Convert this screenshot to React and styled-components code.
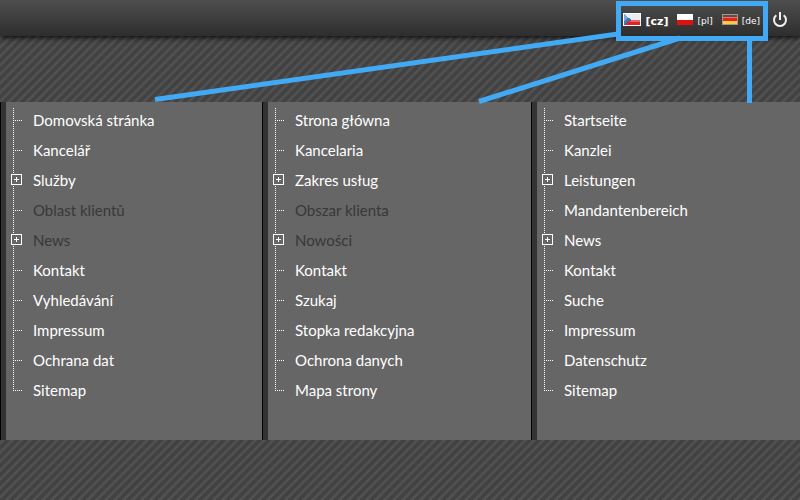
import styled, { createGlobalStyle } from "styled-components";

const theme = {
  blue: "#42aaf5",
  panel: "#666666",
  edge: "#333333",
  white: "#ffffff",
  muted: "#383838",
};

const menus = [
  {
    lang: "cs",
    items: [
      { text: "Domovská stránka" },
      { text: "Kancelář" },
      { text: "Služby", open: true },
      { text: "Oblast klientů", muted: true },
      { text: "News", open: true, muted: true },
      { text: "Kontakt" },
      { text: "Vyhledávání" },
      { text: "Impressum" },
      { text: "Ochrana dat" },
      { text: "Sitemap" },
    ],
  },
  {
    lang: "pl",
    items: [
      { text: "Strona główna" },
      { text: "Kancelaria" },
      { text: "Zakres usług", open: true },
      { text: "Obszar klienta", muted: true },
      { text: "Nowości", open: true, muted: true },
      { text: "Kontakt" },
      { text: "Szukaj" },
      { text: "Stopka redakcyjna" },
      { text: "Ochrona danych" },
      { text: "Mapa strony" },
    ],
  },
  {
    lang: "de",
    items: [
      { text: "Startseite" },
      { text: "Kanzlei" },
      { text: "Leistungen", open: true },
      { text: "Mandantenbereich" },
      { text: "News", open: true },
      { text: "Kontakt" },
      { text: "Suche" },
      { text: "Impressum" },
      { text: "Datenschutz" },
      { text: "Sitemap" },
    ],
  },
];

const CzechFlag = () => (
  <Flag width="18" height="13" viewBox="0 0 18 13" aria-hidden="true">
    <rect width="18" height="13" fill="#fff" />
    <rect x="1" y="1" width="16" height="6" fill="#e9edf2" />
    <rect x="1" y="7" width="16" height="5" fill="#d9252b" />
    <path d="M8 7h9v2H7z" fill="#ee6264" />
    <path d="M1 1l7 5.5L1 12z" fill="#3d79c2" />
    <path d="M1 1l4 3.5L1 8z" fill="#79a9df" />
  </Flag>
);

const PolishFlag = () => (
  <Flag width="16" height="11" viewBox="0 0 16 11" aria-hidden="true">
    <rect width="16" height="6" fill="#fff" />
    <rect y="6" width="16" height="5" fill="#e01010" />
  </Flag>
);

const GermanFlag = () => (
  <Flag width="16" height="11" viewBox="0 0 16 11" aria-hidden="true">
    <rect width="16" height="11" fill="#a39a83" />
    <rect x="1" y="1" width="14" height="3" fill="#57514d" />
    <rect x="1" y="3" width="14" height="4" fill="#e4231c" />
    <rect x="1" y="3" width="14" height="1" fill="#f4716a" />
    <rect x="1" y="7" width="14" height="3" fill="#f6cf45" />
  </Flag>
);

const PowerIcon = () => (
  <svg width="16" height="16" viewBox="0 0 16 16" fill="none" aria-hidden="true">
    <path d="M4.3 3.2a6 6 0 1 0 7.4 0" stroke="#f2f2f2" strokeWidth="2" />
    <path d="M8 0v8" stroke="#f2f2f2" strokeWidth="2" />
  </svg>
);

const Menu = ({ lang, items }) => (
  <Panel lang={lang} aria-label={lang}>
    <Tree>
      {items.map((item, i) => (
        <Row key={item.text}>
          <Branch $first={i === 0} $last={i === items.length - 1}>
            {item.open && (
              <Expand type="button" aria-label={item.text}>
                <svg width="5" height="5" viewBox="0 0 5 5" aria-hidden="true">
                  <path d="M2 0h1v5h-1zM0 2h5v1h-5z" fill="#fff" />
                </svg>
              </Expand>
            )}
          </Branch>
          <MenuLink href="#" $muted={item.muted}>
            {item.text}
          </MenuLink>
        </Row>
      ))}
    </Tree>
  </Panel>
);

function App() {
  return (
    <Page>
      <GlobalStyle />
      <Header>
        <Languages aria-label="Language">
          <LanguageLink href="#" $active>
            <CzechFlag />
            [cz]
          </LanguageLink>
          <LanguageLink href="#">
            <PolishFlag />
            [pl]
          </LanguageLink>
          <LanguageLink href="#">
            <GermanFlag />
            [de]
          </LanguageLink>
        </Languages>
        <PowerButton type="button" aria-label="Log out">
          <PowerIcon />
        </PowerButton>
      </Header>
      <Menus>
        {menus.map((menu) => (
          <Menu key={menu.lang} {...menu} />
        ))}
      </Menus>
      <Pointers viewBox="0 0 800 104" preserveAspectRatio="none" aria-hidden="true">
        <path d="M618 34L155 99.500M680 38L479 101.500M749.500 40V103" />
      </Pointers>
    </Page>
  );
}

const GlobalStyle = createGlobalStyle`
  body {
    margin: 0;
    background: #444;
  }
`;
const Page = styled.div`
  position: relative;
  min-height: 100vh;
  font-family: Lato, "Trebuchet MS", sans-serif;
  background-color: #424242;
  background-image: linear-gradient(
    135deg,
    #505050 25%,
    #424242 25%,
    #424242 50%,
    #505050 50%,
    #505050 75%,
    #424242 75%
  );
  background-size: 9px 9px;
`;
const Header = styled.header`
  display: flex;
  justify-content: flex-end;
  align-items: flex-start;
  gap: 4px;
  height: 36px;
  box-sizing: border-box;
  padding: 1px 12px 0 0;
  background: linear-gradient(#4e4e4e, #2e2e2e);
  box-shadow: 0 1px 6px #000;
`;
const Languages = styled.nav`
  display: flex;
  align-items: center;
  gap: 9px;
  height: 40px;
  box-sizing: border-box;
  padding: 0 3px 0 2px;
  border: 5px solid ${theme.blue};
`;
const LanguageLink = styled.a`
  display: flex;
  align-items: center;
  gap: 4px;
  color: ${theme.white};
  font-family: "DejaVu Sans", Verdana, sans-serif;
  font-size: ${(props) => (props.$active ? "11px" : "9px")};
  font-weight: ${(props) => (props.$active ? 700 : 400)};
  text-decoration: none;
`;
const Flag = styled.svg`
  margin-bottom: 4px;
  shape-rendering: crispEdges;
`;
const PowerButton = styled.button`
  display: flex;
  margin-top: 11px;
  padding: 0;
  border: 0;
  background: none;
  cursor: pointer;
`;
const Menus = styled.main`
  display: grid;
  grid-template-columns: 262fr 269fr 269fr;
  margin-top: 66px;
`;
const Panel = styled.nav`
  padding: 4px 0 34px 5px;
  border-left: 1px solid #000;
  background: ${theme.panel};
  box-shadow: inset 5px 0 ${theme.edge};
`;
const Tree = styled.ul`
  margin: 0;
  padding: 0 0 0 5px;
  list-style: none;
`;
const Row = styled.li`
  display: flex;
  align-items: flex-start;
  height: 30px;
`;
/* dotted trunk and twig, the trunk starts and stops inside the end rows */
const Branch = styled.span`
  width: 22px;
  height: 30px;
  background-image: repeating-linear-gradient(#fff 0 1px, transparent 1px 2px),
    repeating-linear-gradient(90deg, #fff 0 1px, transparent 1px 2px);
  background-repeat: no-repeat;
  background-size: 1px ${(props) => (props.$first ? "28px" : props.$last ? "15px" : "30px")}, 9px 1px;
  background-position: 2px ${(props) => (props.$first ? "2px" : "0")}, 2px 14px;
`;
const Expand = styled.button`
  display: flex;
  align-items: center;
  justify-content: center;
  width: 11px;
  height: 11px;
  margin: 8px 0 0;
  padding: 0;
  border: 1px solid ${theme.white};
  background: ${theme.panel};
  cursor: pointer;
`;
const MenuLink = styled.a`
  color: ${(props) => (props.$muted ? theme.muted : theme.white)};
  font-size: 15px;
  line-height: 28px;
  text-decoration: none;
`;
const Pointers = styled.svg`
  position: absolute;
  top: 0;
  left: 0;
  width: 100%;
  height: 104px;
  pointer-events: none;
  fill: none;
  stroke: ${theme.blue};
  stroke-width: 5px;
`;

export default App;
